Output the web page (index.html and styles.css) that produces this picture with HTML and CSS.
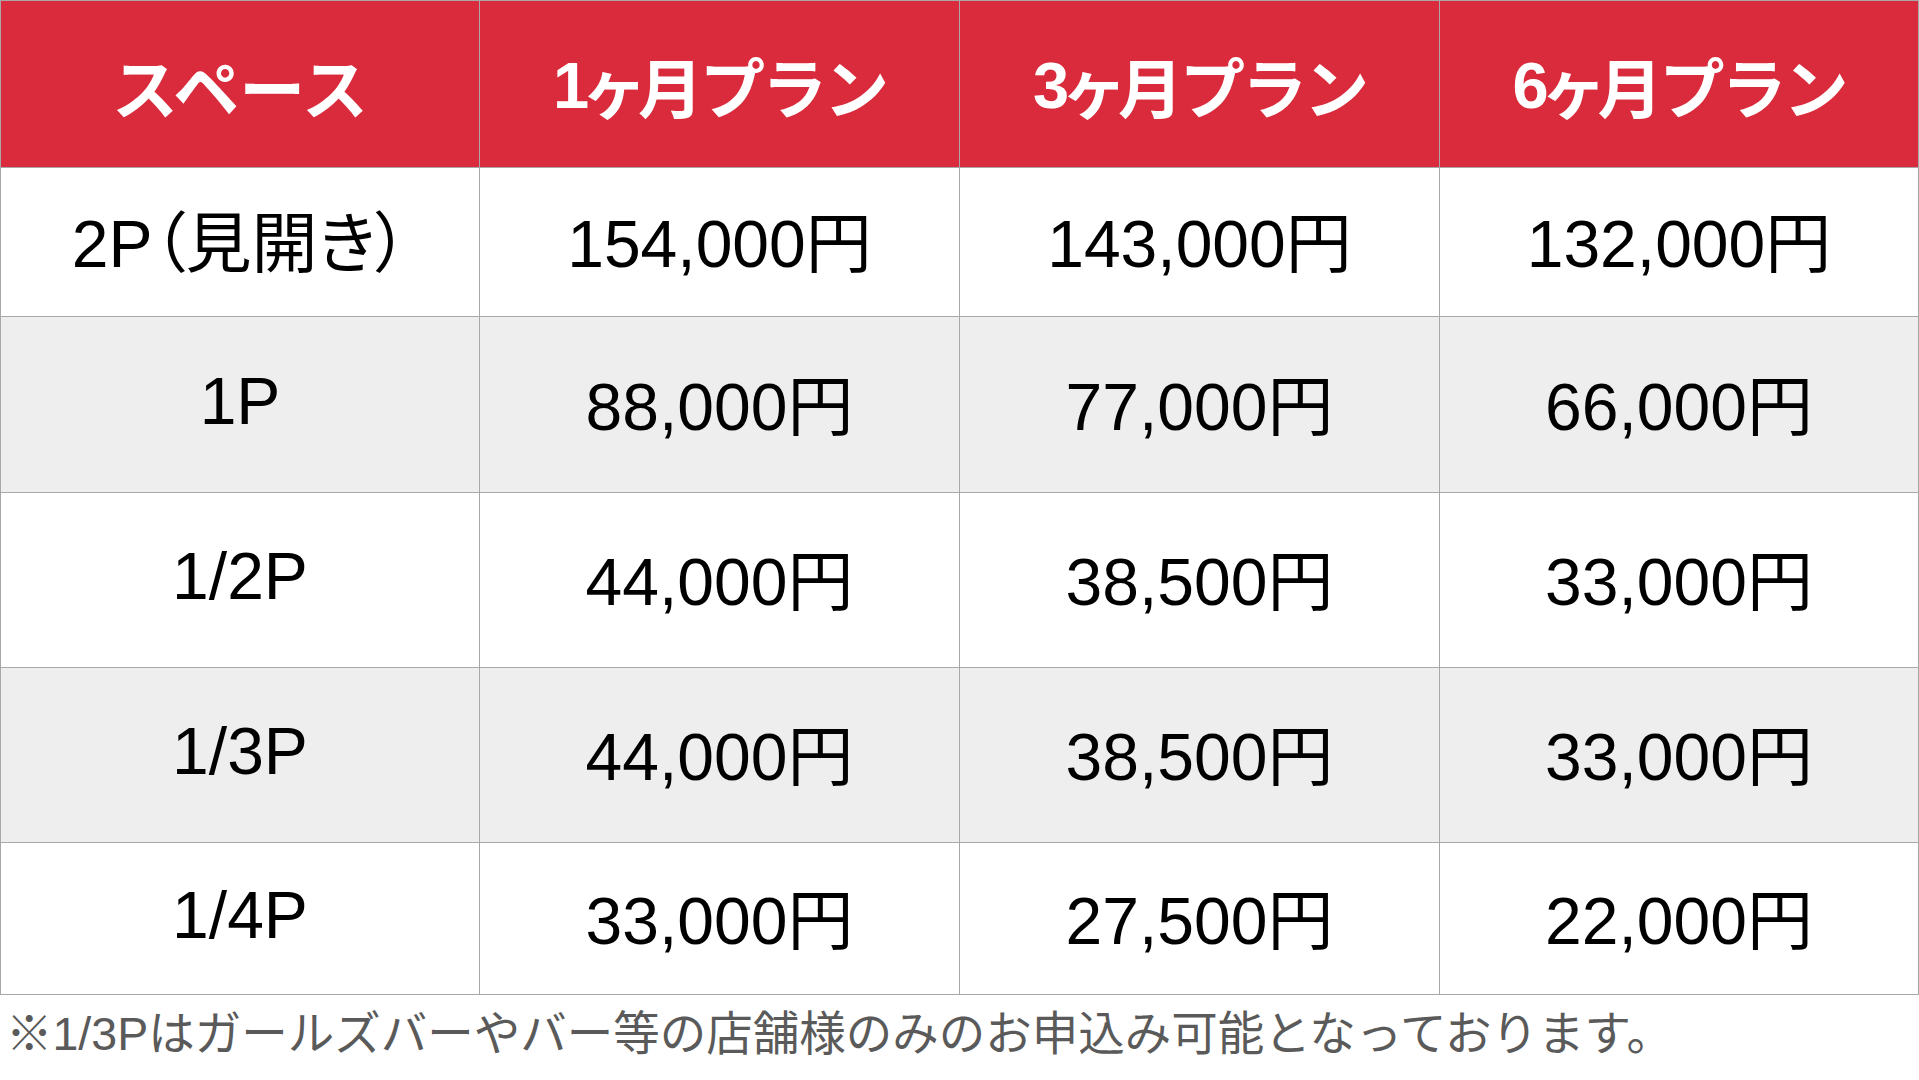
FILE: index.html
```html
<!DOCTYPE html>
<html lang="ja">
<head>
<meta charset="utf-8">
<title>料金表</title>
<link rel="stylesheet" href="styles.css">
</head>
<body>
<main class="page">
  <div class="price-table">
    <div class="cell head">スペース</div>
    <div class="cell head plan">1<span class="ke">ヶ</span>月プラン</div>
    <div class="cell head plan">3<span class="ke">ヶ</span>月プラン</div>
    <div class="cell head plan">6<span class="ke">ヶ</span>月プラン</div>

    <div class="cell prop">2P（見開き）</div>
    <div class="cell">154,000円</div>
    <div class="cell">143,000円</div>
    <div class="cell">132,000円</div>

    <div class="cell alt">1P</div>
    <div class="cell alt">88,000円</div>
    <div class="cell alt">77,000円</div>
    <div class="cell alt">66,000円</div>

    <div class="cell">1/2P</div>
    <div class="cell">44,000円</div>
    <div class="cell">38,500円</div>
    <div class="cell">33,000円</div>

    <div class="cell alt">1/3P</div>
    <div class="cell alt">44,000円</div>
    <div class="cell alt">38,500円</div>
    <div class="cell alt">33,000円</div>

    <div class="cell">1/4P</div>
    <div class="cell">33,000円</div>
    <div class="cell">27,500円</div>
    <div class="cell">22,000円</div>
  </div>
  <p class="note">※1/3Pはガールズバーやバー等の店舗様のみのお申込み可能となっております。</p>
</main>
</body>
</html>
```

FILE: styles.css
```css
html, body {
  margin: 0;
  padding: 0;
  background: #ffffff;
  overflow: hidden;
}

.page {
  width: 1919px;
  height: 1080px;
  display: flex;
  flex-direction: column;
  font-family: "Liberation Sans", Arial, "Noto Sans CJK JP", sans-serif;
}

.price-table {
  display: grid;
  grid-template-columns: 479px 480px 480px 479px;
  grid-template-rows: 167px 149px 176px 175px 175px 152px;
  border-left: 1px solid #a8a8a8;
  border-top: 1px solid #a8a8a8;
  box-sizing: border-box;
  width: 1919px;
}

.cell {
  display: flex;
  align-items: center;
  justify-content: center;
  border-right: 1px solid #a8a8a8;
  border-bottom: 1px solid #a8a8a8;
  box-sizing: border-box;
  font-size: 66px;
  color: #000000;
  background: #ffffff;
  white-space: nowrap;
  padding-bottom: 8px;
}

.cell.prop {
  font-feature-settings: "palt";
}

.cell.alt {
  background: #eeeeee;
}

.cell.head {
  background: #d92b3b;
  color: #ffffff;
  font-weight: 700;
  font-size: 66px;
  padding-top: 2px;
  padding-bottom: 0;
}

.cell.head.plan {
  font-size: 65px;
  letter-spacing: -3px;
}

.ke {
  font-feature-settings: "palt";
}

.note {
  margin: 0;
  flex: 1;
  display: flex;
  align-items: center;
  padding-left: 6px;
  padding-bottom: 16px;
  font-size: 46.5px;
  color: #5a5a5a;
  white-space: nowrap;
}
```
